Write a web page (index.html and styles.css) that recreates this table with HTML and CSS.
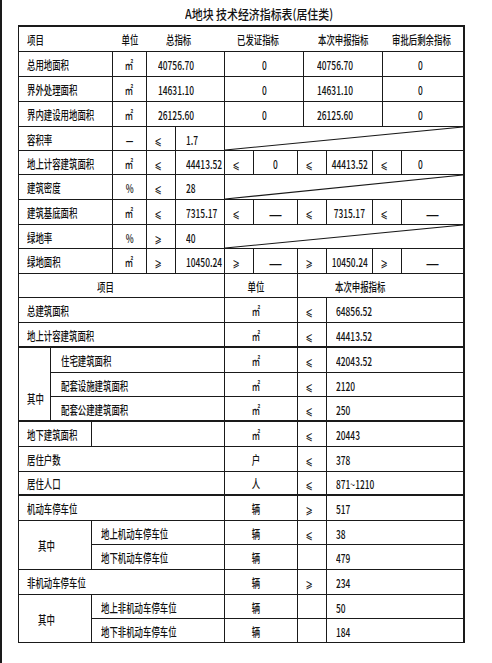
FILE: index.html
```html
<!DOCTYPE html>
<html lang="zh-CN">
<head>
<meta charset="utf-8">
<title>A地块 技术经济指标表(居住类)</title>
<link rel="stylesheet" href="styles.css">
</head>
<body>
<div class="page">
  <div class="title"><span class="t">A地块 技术经济指标表(居住类)</span></div>
  <div class="sheet">
    <!-- header -->
    <div class="c nr x1-4 pl8"><span class="t">项目</span></div>
    <div class="c nr x4-5 C"><span class="t">单位</span></div>
    <div class="c nr x5-7 pl19"><span class="t">总指标</span></div>
    <div class="c nr x7-10 pl12"><span class="t">已发证指标</span></div>
    <div class="c nr x10-13 pl14"><span class="t">本次申报指标</span></div>
    <div class="c x13-15 pl9"><span class="t">审批后剩余指标</span></div>

    <div class="c x1-4 pl8"><span class="t">总用地面积</span></div>
    <div class="c x4-5 C"><span class="t">㎡</span></div>
    <div class="c x5-7 pl11"><span class="t">40756.70</span></div>
    <div class="c x7-10 C"><span class="t">0</span></div>
    <div class="c x10-13 pl13"><span class="t">40756.70</span></div>
    <div class="c x13-15 pl35"><span class="t">0</span></div>

    <div class="c x1-4 pl8"><span class="t">界外处理面积</span></div>
    <div class="c x4-5 C"><span class="t">㎡</span></div>
    <div class="c x5-7 pl11"><span class="t">14631.10</span></div>
    <div class="c x7-10 C"><span class="t">0</span></div>
    <div class="c x10-13 pl13"><span class="t">14631.10</span></div>
    <div class="c x13-15 pl35"><span class="t">0</span></div>

    <div class="c x1-4 pl8"><span class="t">界内建设用地面积</span></div>
    <div class="c x4-5 C"><span class="t">㎡</span></div>
    <div class="c x5-7 pl11"><span class="t">26125.60</span></div>
    <div class="c x7-10 C"><span class="t">0</span></div>
    <div class="c x10-13 pl13"><span class="t">26125.60</span></div>
    <div class="c x13-15 pl35"><span class="t">0</span></div>

    <div class="c x1-4 pl8"><span class="t">容积率</span></div>
    <div class="c x4-5 C"><span class="t bdash">—</span></div>
    <div class="c x5-6 C le"><span class="t">⩽</span></div>
    <div class="c x6-7 pl10"><span class="t">1.7</span></div>
    <div class="c x7-15 diag"><svg viewBox="0 0 100 100" preserveAspectRatio="none"><line x1="0" y1="100" x2="100" y2="0" vector-effect="non-scaling-stroke"/></svg></div>

    <div class="c x1-4 pl8"><span class="t">地上计容建筑面积</span></div>
    <div class="c x4-5 C"><span class="t">㎡</span></div>
    <div class="c x5-6 C le"><span class="t">⩽</span></div>
    <div class="c x6-7 pl10"><span class="t">44413.52</span></div>
    <div class="c x7-8 C le"><span class="t">⩽</span></div>
    <div class="c x8-9 C"><span class="t">0</span></div>
    <div class="c x9-11 C le"><span class="t">⩽</span></div>
    <div class="c x11-12 C"><span class="t">44413.52</span></div>
    <div class="c x12-14 C le"><span class="t">⩽</span></div>
    <div class="c x14-15 pl16"><span class="t">0</span></div>

    <div class="c x1-4 pl8"><span class="t">建筑密度</span></div>
    <div class="c x4-5 C"><span class="t">%</span></div>
    <div class="c x5-6 C le"><span class="t">⩽</span></div>
    <div class="c x6-7 pl10"><span class="t">28</span></div>
    <div class="c x7-15 diag"><svg viewBox="0 0 100 100" preserveAspectRatio="none"><line x1="0" y1="100" x2="100" y2="0" vector-effect="non-scaling-stroke"/></svg></div>

    <div class="c x1-4 pl8"><span class="t">建筑基底面积</span></div>
    <div class="c x4-5 C"><span class="t">㎡</span></div>
    <div class="c x5-6 C le"><span class="t">⩽</span></div>
    <div class="c x6-7 pl10"><span class="t">7315.17</span></div>
    <div class="c x7-8 C le"><span class="t">⩽</span></div>
    <div class="c x8-9 C bot"><span class="dash">—</span></div>
    <div class="c x9-11 C le"><span class="t">⩽</span></div>
    <div class="c x11-12 C"><span class="t">7315.17</span></div>
    <div class="c x12-14 C le"><span class="t">⩽</span></div>
    <div class="c x14-15 C bot"><span class="dash">—</span></div>

    <div class="c x1-4 pl8"><span class="t">绿地率</span></div>
    <div class="c x4-5 C"><span class="t">%</span></div>
    <div class="c x5-6 C le"><span class="t">⩾</span></div>
    <div class="c x6-7 pl10"><span class="t">40</span></div>
    <div class="c x7-15 diag"><svg viewBox="0 0 100 100" preserveAspectRatio="none"><line x1="0" y1="100" x2="100" y2="0" vector-effect="non-scaling-stroke"/></svg></div>

    <div class="c x1-4 pl8"><span class="t">绿地面积</span></div>
    <div class="c x4-5 C"><span class="t">㎡</span></div>
    <div class="c x5-6 C le"><span class="t">⩾</span></div>
    <div class="c x6-7 pl10"><span class="t">10450.24</span></div>
    <div class="c x7-8 C le"><span class="t">⩾</span></div>
    <div class="c x8-9 C bot"><span class="dash">—</span></div>
    <div class="c x9-11 C le"><span class="t">⩾</span></div>
    <div class="c x11-12 C"><span class="t">10450.24</span></div>
    <div class="c x12-14 C le"><span class="t">⩾</span></div>
    <div class="c x14-15 C bot"><span class="dash">—</span></div>

    <!-- section 2 -->
    <div class="c x1-7 pl78"><span class="t">项目</span></div>
    <div class="c x7-9 C unit"><span class="t">单位</span></div>
    <div class="c x9-15 pl37"><span class="t">本次申报指标</span></div>

    <div class="c x1-7 pl8"><span class="t">总建筑面积</span></div>
    <div class="c x7-9 C unit"><span class="t">㎡</span></div>
    <div class="c x9-11 C le"><span class="t">⩽</span></div>
    <div class="c x11-15 pl9"><span class="t">64856.52</span></div>

    <div class="c x1-7 pl8 thick"><span class="t">地上计容建筑面积</span></div>
    <div class="c x7-9 C unit thick"><span class="t">㎡</span></div>
    <div class="c x9-11 C le thick"><span class="t">⩽</span></div>
    <div class="c x11-15 pl9 thick"><span class="t">44413.52</span></div>

    <div class="c x1-2 r3 pl8 low thick"><span class="t">其中</span></div>
    <div class="c x2-7 pl10"><span class="t">住宅建筑面积</span></div>
    <div class="c x7-9 C unit"><span class="t">㎡</span></div>
    <div class="c x9-11 C le"><span class="t">⩽</span></div>
    <div class="c x11-15 pl9"><span class="t">42043.52</span></div>

    <div class="c x2-7 pl10"><span class="t">配套设施建筑面积</span></div>
    <div class="c x7-9 C unit"><span class="t">㎡</span></div>
    <div class="c x9-11 C le"><span class="t">⩽</span></div>
    <div class="c x11-15 pl9"><span class="t">2120</span></div>

    <div class="c x2-7 pl10 thick"><span class="t">配套公建建筑面积</span></div>
    <div class="c x7-9 C unit thick"><span class="t">㎡</span></div>
    <div class="c x9-11 C le thick"><span class="t">⩽</span></div>
    <div class="c x11-15 pl9 thick"><span class="t">250</span></div>

    <div class="c x1-3 pl8"><span class="t">地下建筑面积</span></div>
    <div class="c x3-7"></div>
    <div class="c x7-9 C unit"><span class="t">㎡</span></div>
    <div class="c x9-11 C le"><span class="t">⩽</span></div>
    <div class="c x11-15 pl9"><span class="t">20443</span></div>

    <div class="c x1-7 pl8"><span class="t">居住户数</span></div>
    <div class="c x7-9 C unit"><span class="t">户</span></div>
    <div class="c x9-11 C le"><span class="t">⩽</span></div>
    <div class="c x11-15 pl9"><span class="t">378</span></div>

    <div class="c x1-7 pl8 thick"><span class="t">居住人口</span></div>
    <div class="c x7-9 C unit thick"><span class="t">人</span></div>
    <div class="c x9-11 C le thick"><span class="t">⩽</span></div>
    <div class="c x11-15 pl9 thick"><span class="t">871~1210</span></div>

    <div class="c x1-7 pl8"><span class="t">机动车停车位</span></div>
    <div class="c x7-9 C unit"><span class="t">辆</span></div>
    <div class="c x9-11 C le"><span class="t">⩾</span></div>
    <div class="c x11-15 pl9"><span class="t">517</span></div>

    <div class="c x1-3 r2 pl19"><span class="t">其中</span></div>
    <div class="c x3-7 pl9"><span class="t">地上机动车停车位</span></div>
    <div class="c x7-9 C unit"><span class="t">辆</span></div>
    <div class="c x9-11 C le"><span class="t">⩽</span></div>
    <div class="c x11-15 pl9"><span class="t">38</span></div>

    <div class="c x3-7 pl9"><span class="t">地下机动车停车位</span></div>
    <div class="c x7-9 C unit"><span class="t">辆</span></div>
    <div class="c x9-11"></div>
    <div class="c x11-15 pl9"><span class="t">479</span></div>

    <div class="c x1-7 pl8"><span class="t">非机动车停车位</span></div>
    <div class="c x7-9 C unit"><span class="t">辆</span></div>
    <div class="c x9-11 C le"><span class="t">⩾</span></div>
    <div class="c x11-15 pl9"><span class="t">234</span></div>

    <div class="c x1-3 r2 pl19"><span class="t">其中</span></div>
    <div class="c x3-7 pl9"><span class="t">地上非机动车停车位</span></div>
    <div class="c x7-9 C unit"><span class="t">辆</span></div>
    <div class="c x9-11"></div>
    <div class="c x11-15 pl9"><span class="t">50</span></div>

    <div class="c x3-7 pl9"><span class="t">地下非机动车停车位</span></div>
    <div class="c x7-9 C unit"><span class="t">辆</span></div>
    <div class="c x9-11"></div>
    <div class="c x11-15 pl9"><span class="t">184</span></div>
  </div>
</div>
</body>
</html>
```
FILE: styles.css
```css
* { box-sizing: border-box; }
html, body { margin: 0; padding: 0; background: #fff; }
body {
  font-family: "Noto Sans CJK SC", "DejaVu Sans", sans-serif;
  font-weight: 500;
  color: #111;
}
.page {
  width: 492px;
  height: 663px;
  border-left: 2px solid #1a1a1a;
  overflow: hidden;
}
.title {
  height: 25px;
  padding: 7px 0 0 183px;
  font-size: 13px;
  line-height: 13px;
  white-space: pre;
}
.title .t { transform: scaleX(0.84); transform-origin: left center; }

.sheet {
  margin-left: 16px;
  width: 447px;
  display: grid;
  grid-template-columns: 32px 41px 21px 34px 29px 49px 29px 44px 6px 23px 46px 10px 19px 62px;
  grid-template-rows:
    25px 25px 25px 25px 24px 24px 25px 25px 24px 25px
    24px 25px 25px 25px 24px 25px 25px 25px 24px 25px 24px 25px 25px 24px 24px;
  border-top: 2px solid #1a1a1a;
  border-left: 1px solid #1a1a1a;
  border-right: 1px solid #1a1a1a;
}

.c {
  display: flex;
  align-items: center;
  justify-content: flex-start;
  border-right: 1px solid #1a1a1a;
  border-bottom: 1px solid #1a1a1a;
  padding-top: 2px;
  font-size: 12px;
  line-height: 12px;
  white-space: nowrap;
  min-width: 0;
}
.c.nr { border-right: none; }
.c.thick { border-bottom-width: 2px; }
.C { justify-content: center; }

.t {
  display: inline-block;
  transform: scaleX(0.7);
  transform-origin: left center;
}
.C .t { transform-origin: center center; }

.le { padding-right: 5px; }
.unit { padding-right: 10px; }
.bot { align-items: flex-end; padding-bottom: 3px; }
.low { align-items: flex-start; padding-top: 45px; }

.bdash { font-weight: 700; }
.dash { font-size: 15px; line-height: 15px; display: inline-block; }

.diag { display: block; padding: 0; }
.diag svg { display: block; width: 100%; height: 100%; }
.diag line { stroke: #1a1a1a; stroke-width: 1.1; }

/* horizontal text offsets */
.pl8 { padding-left: 8px; }
.pl9 { padding-left: 9px; }
.pl10 { padding-left: 10px; }
.pl11 { padding-left: 11px; }
.pl12 { padding-left: 12px; }
.pl13 { padding-left: 13px; }
.pl14 { padding-left: 14px; }
.pl16 { padding-left: 16px; }
.pl19 { padding-left: 19px; }
.pl35 { padding-left: 35px; }
.pl37 { padding-left: 37px; }
.pl78 { padding-left: 78px; }

/* grid placement (column lines) */
.x1-2 { grid-column: 1 / 2; }
.x1-3 { grid-column: 1 / 3; }
.x1-4 { grid-column: 1 / 4; }
.x1-7 { grid-column: 1 / 7; }
.x2-7 { grid-column: 2 / 7; }
.x3-7 { grid-column: 3 / 7; }
.x4-5 { grid-column: 4 / 5; }
.x5-6 { grid-column: 5 / 6; }
.x5-7 { grid-column: 5 / 7; }
.x6-7 { grid-column: 6 / 7; }
.x7-8 { grid-column: 7 / 8; }
.x7-9 { grid-column: 7 / 9; }
.x7-10 { grid-column: 7 / 10; }
.x7-15 { grid-column: 7 / 15; }
.x8-9 { grid-column: 8 / 9; }
.x9-11 { grid-column: 9 / 11; }
.x9-15 { grid-column: 9 / 15; }
.x10-13 { grid-column: 10 / 13; }
.x11-12 { grid-column: 11 / 12; }
.x11-15 { grid-column: 11 / 15; }
.x12-14 { grid-column: 12 / 14; }
.x13-15 { grid-column: 13 / 15; }
.x14-15 { grid-column: 14 / 15; }
.r2 { grid-row: span 2; }
.r3 { grid-row: span 3; }
```
